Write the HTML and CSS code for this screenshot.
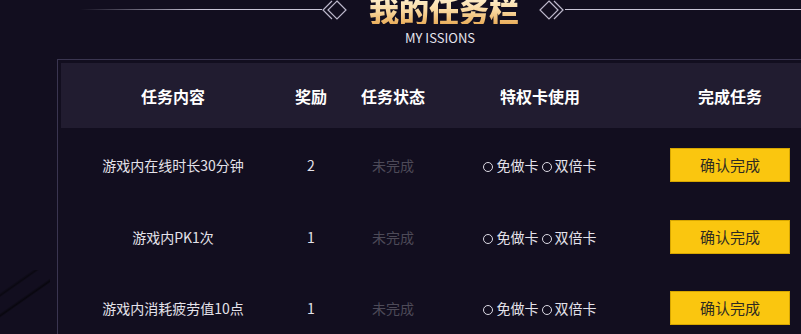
FILE: index.html
```html
<!DOCTYPE html>
<html lang="zh-CN">
<head>
    <meta charset="UTF-8">
    <title>我的任务栏</title>
    <link rel="stylesheet" href="styles.css">
</head>
<body>
    <div class="page">
        <div class="title-bar">
            <span class="line line-left"></span>
            <svg class="deco" width="26" height="20" viewBox="0 0 26 20">
                <polyline points="10,1 1,10 10,19" fill="none" stroke="#bdb8cc" stroke-width="1.2"/>
                <polygon points="15,1 24,10 15,19 6,10" fill="none" stroke="#bdb8cc" stroke-width="1.2"/>
            </svg>
            <div class="title">
                <h1>我的任务栏</h1>
                <p>MY ISSIONS</p>
            </div>
            <svg class="deco" width="27" height="20" viewBox="0 0 27 20">
                <polygon points="11,1 20,10 11,19 2,10" fill="none" stroke="#bdb8cc" stroke-width="1.2"/>
                <polyline points="16,1 25,10 16,19" fill="none" stroke="#bdb8cc" stroke-width="1.2"/>
            </svg>
            <span class="line line-right"></span>
        </div>

        <div class="task-box">
            <table class="tasks">
                <colgroup>
                    <col style="width: 224px">
                    <col style="width: 52px">
                    <col style="width: 112px">
                    <col style="width: 182px">
                    <col style="width: 198px">
                </colgroup>
                <thead>
                    <tr>
                        <th>任务内容</th>
                        <th>奖励</th>
                        <th>任务状态</th>
                        <th>特权卡使用</th>
                        <th>完成任务</th>
                    </tr>
                </thead>
                <tbody>
                    <tr>
                        <td>游戏内在线时长30分钟</td>
                        <td>2</td>
                        <td class="status">未完成</td>
                        <td><span class="radio"></span>免做卡 <span class="radio"></span>双倍卡</td>
                        <td><button class="confirm">确认完成</button></td>
                    </tr>
                    <tr>
                        <td>游戏内PK1次</td>
                        <td>1</td>
                        <td class="status">未完成</td>
                        <td><span class="radio"></span>免做卡 <span class="radio"></span>双倍卡</td>
                        <td><button class="confirm">确认完成</button></td>
                    </tr>
                    <tr>
                        <td>游戏内消耗疲劳值10点</td>
                        <td>1</td>
                        <td class="status">未完成</td>
                        <td><span class="radio"></span>免做卡 <span class="radio"></span>双倍卡</td>
                        <td><button class="confirm">确认完成</button></td>
                    </tr>
                </tbody>
            </table>
        </div>
        <div class="streaks"></div>
    </div>
</body>
</html>
```

FILE: styles.css
```css
* {
    margin: 0;
    padding: 0;
    box-sizing: border-box;
}

body {
    background: #120e1f;
    font-family: "Noto Sans CJK SC", "Noto Sans", sans-serif;
    color: #e4e2ea;
    overflow: hidden;
}

.page {
    position: relative;
    width: 801px;
    height: 334px;
    overflow: hidden;
}

.title-bar {
    display: flex;
    align-items: flex-start;
    height: 59px;
}

.line {
    height: 1px;
    margin-top: 9px;
}

.line-left {
    width: 242px;
    margin-left: 80px;
    background: linear-gradient(to right, rgba(200, 196, 214, 0), #c8c4d6 50%);
}

.line-right {
    flex: 1;
    background: #c8c4d6;
}

.deco {
    flex-shrink: 0;
}

.title {
    width: 152px;
    margin: 0 18px 0 20px;
    text-align: center;
}

.title h1 {
    margin-top: -6px;
    font-size: 30px;
    line-height: 30px;
    font-weight: 900;
    white-space: nowrap;
    background: linear-gradient(to bottom, #fff6dc, #f9d8a0 55%, #eaae5c);
    -webkit-background-clip: text;
    background-clip: text;
    color: transparent;
}

.title p {
    margin-top: 6px;
    margin-left: -8px;
    font-size: 13px;
    line-height: 16px;
    color: #e6e4ee;
    white-space: nowrap;
}

.task-box {
    width: 780px;
    margin-left: 57px;
    padding: 3px 0 0 3px;
    border: 1px solid #3a3550;
    border-right: none;
    border-bottom: none;
}

.tasks {
    width: 768px;
    border-collapse: collapse;
    table-layout: fixed;
    text-align: center;
}

.tasks th {
    height: 65px;
    background: #211c30;
    color: #fff;
    font-size: 16px;
    font-weight: bold;
}

.tasks td {
    height: 71px;
    font-size: 14px;
    color: #e4e2ea;
    white-space: nowrap;
}

.tasks tbody tr:first-child td {
    height: 73px;
}

.tasks td.status {
    color: #4d4a58;
}

.radio {
    display: inline-block;
    width: 10px;
    height: 10px;
    margin-right: 3px;
    border: 1.3px solid #dcdae4;
    border-radius: 50%;
    vertical-align: -1px;
}

.confirm {
    width: 120px;
    height: 34px;
    background: #fac60f;
    border: 1px solid #d7a600;
    color: #2e2a22;
    font-family: "Noto Sans CJK SC", sans-serif;
    font-size: 15px;
    cursor: pointer;
}

.streaks {
    position: absolute;
    left: -10px;
    top: 270px;
    width: 60px;
    height: 60px;
    background:
        linear-gradient(-35deg, transparent 46%, rgba(0, 0, 0, 0.55) 48%, transparent 51%),
        linear-gradient(-35deg, transparent 66%, rgba(0, 0, 0, 0.45) 68%, transparent 71%);
    pointer-events: none;
}
```
